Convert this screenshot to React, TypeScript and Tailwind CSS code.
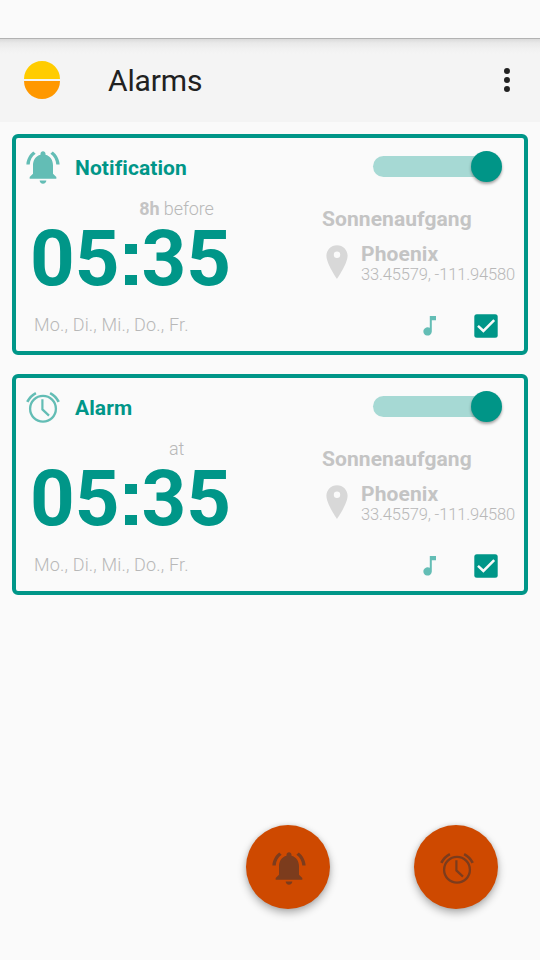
import React from "react";

type Kind = "notification" | "alarm";

function BellIcon() {
  return (
    <svg width="40" height="40" viewBox="0 0 24 24" fill="currentColor">
      <path d="M7.58 4.08L6.15 2.65C3.75 4.48 2.17 7.3 2.03 10.5h2c.15-2.65 1.51-4.97 3.55-6.42zM19.97 10.5h2c-.15-3.2-1.73-6.02-4.12-7.85l-1.42 1.43c2.02 1.45 3.39 3.77 3.54 6.42zM18 11c0-3.07-1.64-5.64-4.5-6.32V4c0-.83-.67-1.5-1.5-1.5s-1.5.67-1.5 1.5v.68C7.63 5.36 6 7.92 6 11v5l-2 2v1h16v-1l-2-2zM10 20.1h4c0 1.1-.9 1.9-2 1.9s-2-.8-2-1.9z" />
    </svg>
  );
}

function ClockIcon() {
  return (
    <svg width="40" height="40" viewBox="0 0 40 40" fill="none" stroke="currentColor">
      <circle cx="20" cy="21.7" r="12.9" strokeWidth="2.3" />
      <path d="M19.4 12.2V22.4L26 28.6" strokeWidth="2.2" />
      <path d="M4.3 14.9Q7.6 8.7 12.9 6.1M35.7 14.9Q32.4 8.7 27.1 6.1" strokeWidth="2.7" />
    </svg>
  );
}

function KindIcon({ kind }: { kind: Kind }) {
  return kind === "notification" ? <BellIcon /> : <ClockIcon />;
}

function Switch() {
  return (
    <div className="relative mb-[2px] h-[21px] w-[128px] rounded-full bg-[#a6d9d4]">
      <div className="absolute -top-[5px] -right-[1px] size-[31px] rounded-full bg-[#009587] shadow-[0_2px_3px_rgba(0,0,0,0.35)]" />
    </div>
  );
}

function Time({ hours, minutes }: { hours: string; minutes: string }) {
  return (
    <p className="h-[78px] pl-[14px] text-[78px] leading-[78px] font-bold text-[#009688]">
      {hours}
      <span className="relative text-transparent">
        :
        <i className="absolute bottom-[50px] left-[5px] h-[10px] w-3 bg-[#009688]" />
        <i className="absolute bottom-[19px] left-[5px] h-[10px] w-3 bg-[#009688]" />
      </span>
      {minutes}
    </p>
  );
}

function AlarmCard({ kind, title, lead, relation }: { kind: Kind; title: string; lead?: string; relation: string }) {
  return (
    <section className="h-[221px] rounded-[6px] border-4 border-[#009688] text-[#c4c4c4]">
      <header className="flex h-[58px] items-center pl-[7px] pr-[23px] text-[#009688]">
        <span className="opacity-60">
          <KindIcon kind={kind} />
        </span>
        <h2 className="ml-3 flex-1 pt-[2px] text-[21px] leading-6 font-bold tracking-[0.08px]">{title}</h2>
        <Switch />
      </header>
      <div className="flex">
        <div className="w-[306px] pt-px">
          <p className="w-[307px] pl-[14px] text-center text-[18px] leading-[23px] tracking-[-0.12px]">
            {lead && <b>{lead} </b>}
            <span className="font-light text-[#b8b8b8]">{relation}</span>
          </p>
          <Time hours="05" minutes="35" />
          <p className="mt-[15px] pl-[18px] text-[18px] leading-6 font-light tracking-[0.17px] text-[#b8b8b8]">Mo., Di., Mi., Do., Fr.</p>
        </div>
        <div className="flex-1 pt-[11px]">
          <p className="text-[21px] leading-6 font-bold tracking-[0.08px]">Sonnenaufgang</p>
          <div className="mt-[11px] flex">
            <svg className="mt-[3px] ml-[4px]" width="22" height="34" viewBox="0 0 22 34" fill="#d8d8d8" fillRule="evenodd">
              <path d="M11 .2C5.1.2.4 4.9.4 10.8.4 18.7 11 34 11 34S21.600 18.700 21.600 10.800C21.600 4.900 16.900.2 11 .2zM11 6.500a3.200 3.200 0 1 1 0 6.400a3.200 3.200 0 0 1 0-6.400z" />
            </svg>
            <div className="ml-[13px]">
              <p className="text-[21px] leading-6 font-bold tracking-[0.1px]">Phoenix</p>
              <p className="pt-px text-[16.5px] leading-4 font-light tracking-[-0.16px] whitespace-nowrap text-[#b8b8b8]">33.45579, -111.94580</p>
            </div>
          </div>
          <div className="mt-[31px] flex items-center pl-[101px] text-[#009688]">
            <svg className="opacity-60" width="14" height="20" viewBox="0 0 14 20" fill="currentColor">
              <path d="M6.800 0H13v4.300H8.800V15.500A4.200 4.200 0 1 1 6.800 11.800z" />
            </svg>
            <svg className="ml-[37px]" width="24" height="24" viewBox="0 0 24 24">
              <rect x=".3" y=".3" width="23.400" height="23.400" rx="2.500" fill="currentColor" />
              <path d="M4 11.800L9.400 17L20.200 6.200" fill="none" stroke="#fafafa" strokeWidth="2.500" />
            </svg>
          </div>
        </div>
      </div>
    </section>
  );
}

function Fab({ kind }: { kind: Kind }) {
  return (
    <button className="flex size-[84px] items-center justify-center rounded-full bg-[#ce4900] pt-[2px] pl-[2px] text-[#7c3c1d] shadow-[0_4px_9px_rgba(0,0,0,0.3),0_0_4px_rgba(0,0,0,0.1)]">
      <KindIcon kind={kind} />
    </button>
  );
}

export default function App() {
  return (
    <main className="flex h-[960px] w-[540px] flex-col overflow-hidden bg-[#fafafa] font-['Roboto',sans-serif]">
      <div className="h-[39px] border-b border-[#b2b2b2]" />
      <header className="flex h-[83px] items-center bg-[#f4f4f4] bg-[linear-gradient(to_bottom,#dadada_0px,#e9e9e9_4px,#f1f1f1_10px,#f4f4f4_15px)] pr-[30px] pb-px pl-6 text-[#212121]">
        <svg width="36" height="38" viewBox="0 0 36 38">
          <path d="M0 18C0 8 8 0 18 0S36 8 36 18z" fill="#ffcc00" />
          <path d="M0 20C0 30 8 38 18 38S36 30 36 20z" fill="#ff9800" />
        </svg>
        <h1 className="ml-12 flex-1 pt-px text-[30px] leading-9 tracking-[-0.15px]">Alarms</h1>
        <div className="flex flex-col gap-[3px]">
          <i className="size-[6px] rounded-full bg-[#212121]" />
          <i className="size-[6px] rounded-full bg-[#212121]" />
          <i className="size-[6px] rounded-full bg-[#212121]" />
        </div>
      </header>
      <div className="flex flex-1 flex-col gap-[19px] px-3 pt-3">
        <AlarmCard kind="notification" title="Notification" lead="8h" relation="before" />
        <AlarmCard kind="alarm" title="Alarm" relation="at" />
      </div>
      <div className="flex justify-end gap-[84px] pr-[42px] pb-[51px]">
        <Fab kind="notification" />
        <Fab kind="alarm" />
      </div>
    </main>
  );
}
